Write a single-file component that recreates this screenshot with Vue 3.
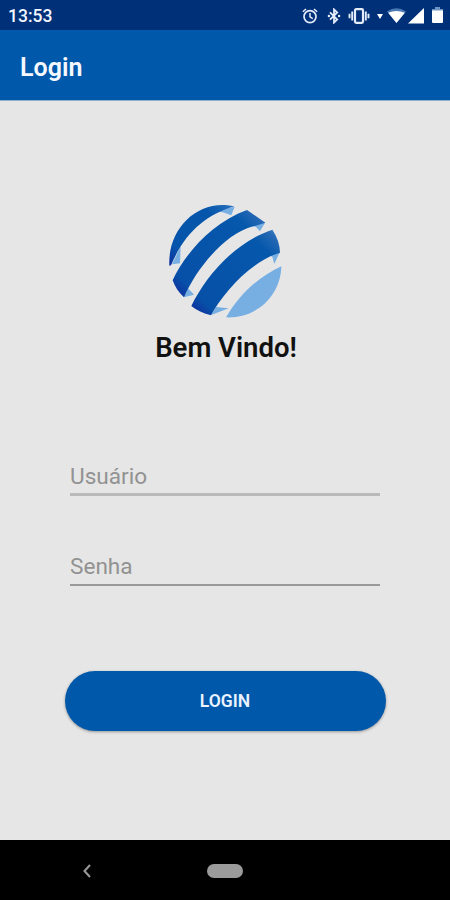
<template>
  <div class="screen">
    <div class="status-bar">
      <span class="clock">13:53</span>
      <div class="status-icons">
        <svg class="alarm" viewBox="0 0 16 16">
          <circle cx="8" cy="8.6" r="6" fill="none" stroke="#e4ecfa" stroke-width="1.7" />
          <path d="M.8 3.8 4 1M15.2 3.8 12 1M8 5v3.8l2.8 1.8" fill="none" stroke="#e4ecfa" stroke-width="1.5" />
        </svg>
        <svg class="bluetooth" viewBox="0 0 14 16">
          <path d="M3 4.3 10.2 11.5 7 14.6V1.4l3.2 3.1L3 11.7" fill="none" stroke="#e4ecfa" stroke-width="1.8" />
          <circle cx="1.9" cy="8" r="1.2" fill="#e4ecfa" />
          <circle cx="12.1" cy="8" r="1.2" fill="#e4ecfa" />
        </svg>
        <svg class="vibrate" viewBox="0 0 22 16">
          <rect x="7" y="1.2" width="8" height="13.6" rx="1.2" fill="none" stroke="#e4ecfa" stroke-width="2.2" />
          <path d="M4.2 3.5v9M17.8 3.5v9M1.5 5.7v4.6M20.5 5.7v4.6" stroke="#e4ecfa" stroke-width="1.9" />
        </svg>
        <svg class="data" viewBox="0 0 7 7">
          <path d="M0 .5h7L3.5 6.5z" fill="#fff" />
        </svg>
        <svg class="wifi" viewBox="0 0 19 15">
          <path d="M0 3.5Q9.5-3 19 3.5L9.5 15z" fill="#4b78b4" />
          <path d="M1.2 4.8Q9.5 1.2 17.8 4.8L9.5 15z" fill="#fff" />
        </svg>
        <svg class="signal" viewBox="0 0 16 16">
          <path d="M0 15.5 16 0v15.5z" fill="#fff" />
        </svg>
        <svg class="battery" viewBox="0 0 11 17">
          <path d="M3 0h5v2h3v3H0V2h3z" fill="#6f94c4" />
          <path d="M0 3.5h11V15q0 1-1 1H1q-1 0-1-1z" fill="#fff" />
        </svg>
      </div>
    </div>

    <header class="toolbar">
      <h1>Login</h1>
    </header>

    <main class="content">
      <svg class="logo" viewBox="0 0 390 390">
        <defs>
          <linearGradient id="band" x1="0" y1="1" x2="1" y2="0">
            <stop offset="0" stop-color="#10259a" />
            <stop offset=".15" stop-color="#0750a8" />
            <stop offset=".8" stop-color="#0558ac" />
            <stop offset=".92" stop-color="#2668b4" />
            <stop offset="1" stop-color="#4b88cb" />
          </linearGradient>
          <linearGradient id="edge" x1="0" y1="1" x2="1" y2="0">
            <stop offset="0" stop-color="#102f9c" />
            <stop offset=".2" stop-color="#0554ab" />
            <stop offset=".75" stop-color="#0556ab" />
            <stop offset="1" stop-color="#2a70bd" />
          </linearGradient>
        </defs>
        <path d="M62 154 60 205 36 208zM160 48l64-13-10 26-26-9z" fill="#78afe3" />
        <path d="M28 212C23 110 101 22 202 31l21 3C137 60 75 112 33 211z" fill="url(#edge)" />
        <path d="m84 280 18 19-30 8zM266 92l50-10-16 27-13-14z" fill="#78afe3" />
        <path d="M38 256C70 185 150 85 261 45l55 38-36 11C195 115 108 222 72 307 56 292 45 276 38 256z" fill="url(#band)" />
        <path d="m168 336 38 4-52 20zM322 180l38-10-17 37-6-22z" fill="#78afe3" />
        <path d="M94 333C132 255 215 145 337 104q22 32 23 69C270 200 188 296 153 361 127 354 108 345 94 333z" fill="url(#band)" />
        <path d="M198 367C235 303 290 248 364 214 362 302 290 371 198 367z" fill="#78afe3" />
      </svg>
      <h2>Bem Vindo!</h2>

      <form class="form" @submit.prevent>
        <input v-model="user" class="field user" type="text" placeholder="Usuário" />
        <input v-model="password" class="field password" type="password" placeholder="Senha" />
        <button class="login-button" type="submit">LOGIN</button>
      </form>
    </main>

    <nav class="nav-bar">
      <svg class="back" viewBox="0 0 8 14">
        <path d="M7 1 1.5 7 7 13" fill="none" stroke="#969696" stroke-width="2.1" />
      </svg>
      <span class="home"></span>
    </nav>
  </div>
</template>

<script setup>
import { ref } from 'vue';

const user = ref('');
const password = ref('');
</script>

<style>
body {
  margin: 0;
  background: #e6e6e6;
}
</style>

<style scoped>
.screen {
  width: 450px;
  height: 900px;
  display: flex;
  flex-direction: column;
  overflow: hidden;
  background: #e6e6e6;
  font-family: Roboto, "Liberation Sans", sans-serif;
}
.status-bar {
  flex: none;
  height: 30px;
  box-sizing: border-box;
  padding: 1px 7px 0 8px;
  display: flex;
  justify-content: space-between;
  align-items: center;
  background: #003078;
}
.clock {
  color: #f2f6ff;
  font-size: 17.5px;
  font-weight: 500;
  line-height: 30px;
  padding-top: 1px;
}
.status-icons {
  display: flex;
  align-items: center;
}
.status-icons svg {
  display: block;
}
.alarm {
  width: 16px;
  height: 16px;
  margin-right: 9px;
}
.bluetooth {
  width: 14px;
  height: 16px;
  margin-right: 7px;
}
.vibrate {
  width: 22px;
  height: 16px;
  margin-right: 7px;
}
.data {
  width: 6px;
  height: 7px;
  margin: 2px 4px 0 0;
}
.wifi {
  width: 19px;
  height: 15px;
  margin-right: 2px;
}
.signal {
  width: 16px;
  height: 16px;
  margin-right: 8px;
}
.battery {
  width: 11px;
  height: 17px;
}
.toolbar {
  flex: none;
  height: 71px;
  box-sizing: border-box;
  padding: 4px 20px 0;
  display: flex;
  align-items: center;
  background: #0058aa;
  border-bottom: 1px solid #8fb0cf;
}
.toolbar h1 {
  margin: 0;
  color: #f5f9ff;
  font-size: 25px;
  font-weight: 600;
}
.content {
  flex: 1;
  display: flex;
  flex-direction: column;
  align-items: center;
  padding-top: 94px;
}
.logo {
  width: 130px;
  height: 130px;
}
h2 {
  margin: 5px 0 0 2px;
  color: #111;
  font-size: 27.5px;
  font-weight: 600;
  line-height: 36px;
}
.form {
  width: 321px;
  display: flex;
  flex-direction: column;
  align-items: center;
  margin-top: 91px;
}
.field {
  width: 310px;
  height: 39px;
  box-sizing: border-box;
  padding: 3px 0 0;
  border: 0;
  border-radius: 0;
  outline: none;
  background: transparent;
  color: #222;
  font-family: inherit;
  font-size: 22.6px;
}
.field::placeholder {
  color: #929292;
  opacity: 1;
}
.user {
  border-bottom: 3px solid #bababa;
}
.password {
  margin-top: 51px;
  padding-top: 1px;
  border-bottom: 2px solid #999;
}
.login-button {
  width: 321px;
  height: 60px;
  margin-top: 85px;
  padding: 0;
  border: 0;
  border-radius: 30px;
  background: #0058aa;
  box-shadow: 0 1px 3px rgba(0, 0, 0, 0.35);
  color: #eaf2ff;
  font-family: inherit;
  font-size: 17.5px;
  font-weight: 600;
}
.nav-bar {
  flex: none;
  height: 60px;
  box-sizing: border-box;
  padding: 1px 0 0 83px;
  display: flex;
  align-items: center;
  background: #000;
}
.back {
  width: 8px;
  height: 14px;
}
.home {
  width: 36px;
  height: 14px;
  margin-left: 116px;
  border-radius: 7px;
  background: #9b9b9b;
}
</style>
